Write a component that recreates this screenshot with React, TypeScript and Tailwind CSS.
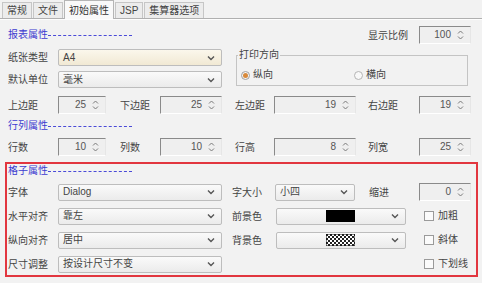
import React from "react";

const FONT = "font-['Liberation_Sans','Noto_Sans_CJK_SC',sans-serif]";

function Arrows() {
  return (
    <svg width="7" height="12" viewBox="0 0 7 12" className="shrink-0">
      <path d="M1 4.5 L3.5 2 L6 4.5" fill="none" stroke="#7a7a7a" strokeWidth="1" />
      <path d="M1 7.5 L3.5 10 L6 7.5" fill="none" stroke="#7a7a7a" strokeWidth="1" />
    </svg>
  );
}

function Chevron() {
  return (
    <svg width="8" height="6" viewBox="0 0 8 6" className="shrink-0">
      <path d="M1 1.5 L4 4.5 L7 1.5" fill="none" stroke="#555" strokeWidth="1.4" />
    </svg>
  );
}

function Spin({ value, className }: { value: string; className: string }) {
  return (
    <div
      className={`flex items-center justify-end gap-[6px] pr-[6px] h-[18px] bg-[#efefef] border-l border-t border-l-[#8a8a8a] border-t-[#8a8a8a] border-r border-b border-r-[#e6e6e6] border-b-[#ffffff] text-[#555] ${className}`}
    >
      <span className="leading-none">{value}</span>
      <Arrows />
    </div>
  );
}

function Combo({
  value,
  className,
  cream,
  children,
}: {
  value?: string;
  className: string;
  cream?: boolean;
  children?: React.ReactNode;
}) {
  return (
    <div
      className={`flex items-center h-[17px] rounded-[2px] border border-[#bdbdbd] pl-[4px] pr-[6px] text-[#444] ${
        cream ? "bg-gradient-to-b from-[#fbf7ec] to-[#f1e9d4]" : "bg-gradient-to-b from-[#fafafa] to-[#ebebeb]"
      } ${className}`}
    >
      <div className="flex-1 flex items-center min-w-0 leading-none">{children ?? value}</div>
      <Chevron />
    </div>
  );
}

function Title({ text, className }: { text: string; className: string }) {
  return (
    <div className={`flex items-center ${className}`}>
      <span className="text-[#3b3bd0] leading-none">{text}</span>
      <div className="w-[84px] border-t border-dashed border-[#4a4ad8] mt-[1px]" />
    </div>
  );
}

function Check({ label }: { label: string }) {
  return (
    <div className="flex items-center gap-[4px] text-[#444]">
      <div className="w-[10px] h-[10px] border border-[#9a9a9a] bg-[#fbfbfb]" />
      <span className="leading-none">{label}</span>
    </div>
  );
}

function Tab({ text, active }: { text: string; active?: boolean }) {
  return (
    <div
      className={
        active
          ? "h-[19px] px-[4px] flex items-center border border-b-0 border-[#b5b5b5] bg-[#f9f9f9] text-[#333] -mb-[1px] relative"
          : "h-[16px] px-[4px] flex items-center border border-b-0 border-[#c6c6c6] bg-[#ececec] text-[#444]"
      }
    >
      {text}
    </div>
  );
}

export default function App() {
  return (
    <div className={`w-[482px] h-[283px] bg-[#f2f2f2] overflow-hidden text-[10px] ${FONT}`}>
      {/* Tabs */}
      <div className="flex items-end gap-[1px] pl-[2px] h-[19px] border-b border-[#b0b0b0]">
        <Tab text="常规" />
        <Tab text="文件" />
        <Tab text="初始属性" active />
        <Tab text="JSP" />
        <Tab text="集算器选项" />
      </div>
      <div className="h-[1px] bg-[#fdfdfd]" />

      {/* Section 1 title + ratio */}
      <div className="flex items-center justify-between mt-[6px] h-[18px] pr-[11px]">
        <Title text="报表属性" className="pl-[8px]" />
        <div className="flex items-center">
          <span className="text-[#444] mr-[11px]">显示比例</span>
          <Spin value="100" className="w-[52px]" />
        </div>
      </div>

      {/* paper + direction */}
      <div className="flex mt-[5px]">
        <div className="flex flex-col gap-[5px] pl-[8px]">
          <div className="flex items-center">
            <span className="w-[50px] text-[#444]">纸张类型</span>
            <Combo value="A4" cream className="w-[164px]" />
          </div>
          <div className="flex items-center">
            <span className="w-[50px] text-[#444]">默认单位</span>
            <Combo value="毫米" className="w-[164px]" />
          </div>
        </div>
        <div className="ml-[14px] w-[232px] pt-[6px]">
          <div className="h-[31px] border border-[#c4c4c4] relative flex items-center pl-[4px]">
            <span className="absolute -top-[7px] left-[1px] bg-[#f2f2f2] px-[1px] text-[#444] leading-[12px]">
              打印方向
            </span>
            <div className="flex items-center gap-[3px] w-[113px] mt-[9px]">
              <div className="w-[9px] h-[9px] rounded-full border border-[#a0a0a0] bg-[#f6f6f6] flex items-center justify-center">
                <div className="w-[5px] h-[5px] rounded-full bg-[#d88a3c]" />
              </div>
              <span className="text-[#444] leading-none">纵向</span>
            </div>
            <div className="flex items-center gap-[3px] mt-[9px]">
              <div className="w-[9px] h-[9px] rounded-full border border-[#b4b4b4] bg-[#f8f8f8]" />
              <span className="text-[#444] leading-none">横向</span>
            </div>
          </div>
        </div>
      </div>

      {/* margins */}
      <div className="flex items-center mt-[8px] pl-[8px] text-[#444]">
        <span className="w-[50px]">上边距</span>
        <Spin value="25" className="w-[48px]" />
        <span className="ml-[14px] w-[40px]">下边距</span>
        <Spin value="25" className="w-[62px]" />
        <span className="ml-[13px] w-[39px]">左边距</span>
        <Spin value="19" className="w-[82px]" />
        <span className="ml-[12px] w-[51px]">右边距</span>
        <Spin value="19" className="w-[52px]" />
      </div>

      {/* section 2 */}
      <div className="mt-[6px] h-[12px] flex items-center">
        <Title text="行列属性" className="pl-[8px]" />
      </div>
      <div className="flex items-center mt-[6px] pl-[8px] text-[#444]">
        <span className="w-[50px]">行数</span>
        <Spin value="10" className="w-[48px]" />
        <span className="ml-[14px] w-[40px]">列数</span>
        <Spin value="10" className="w-[62px]" />
        <span className="ml-[13px] w-[39px]">行高</span>
        <Spin value="8" className="w-[82px]" />
        <span className="ml-[12px] w-[51px]">列宽</span>
        <Spin value="25" className="w-[52px]" />
      </div>

      {/* cell box */}
      <div className="mx-[5px] mt-[6px] h-[115px] w-[473px] border-2 border-[#e2363f] pt-[1px]">
        <div className="h-[12px] flex items-center">
          <Title text="格子属性" className="pl-[1px]" />
        </div>
        <div className="flex flex-col gap-[6px] mt-[6px] pl-[1px] text-[#444]">
          <div className="flex items-center h-[18px]">
            <span className="w-[50px]">字体</span>
            <Combo value="Dialog" className="w-[164px]" />
            <span className="ml-[10px] w-[43px]">字大小</span>
            <Combo value="小四" className="w-[80px]" />
            <span className="ml-[14px] w-[50px]">缩进</span>
            <Spin value="0" className="w-[52px]" />
          </div>
          <div className="flex items-center h-[18px]">
            <span className="w-[50px]">水平对齐</span>
            <Combo value="靠左" className="w-[164px]" />
            <span className="ml-[10px] w-[44px]">前景色</span>
            <Combo className="w-[130px]">
              <div className="flex-1 flex justify-center">
                <div className="w-[29px] h-[12px] bg-black ml-[8px]" />
              </div>
            </Combo>
            <div className="ml-[18px]">
              <Check label="加粗" />
            </div>
          </div>
          <div className="flex items-center h-[18px]">
            <span className="w-[50px]">纵向对齐</span>
            <Combo value="居中" className="w-[164px]" />
            <span className="ml-[10px] w-[44px]">背景色</span>
            <Combo className="w-[130px]">
              <div className="flex-1 flex justify-center">
                <svg width="29" height="12" className="ml-[8px]">
                  <defs>
                    <pattern id="chk" width="4" height="4" patternUnits="userSpaceOnUse">
                      <rect width="4" height="4" fill="#fff" />
                      <rect width="2" height="2" fill="#222" />
                      <rect x="2" y="2" width="2" height="2" fill="#222" />
                    </pattern>
                  </defs>
                  <rect x="0" y="0" width="29" height="12" fill="url(#chk)" stroke="#111" strokeWidth="1" />
                </svg>
              </div>
            </Combo>
            <div className="ml-[18px]">
              <Check label="斜体" />
            </div>
          </div>
          <div className="flex items-center h-[18px]">
            <span className="w-[50px]">尺寸调整</span>
            <Combo value="按设计尺寸不变" className="w-[164px]" />
            <div className="ml-[202px]">
              <Check label="下划线" />
            </div>
          </div>
        </div>
      </div>
    </div>
  );
}
